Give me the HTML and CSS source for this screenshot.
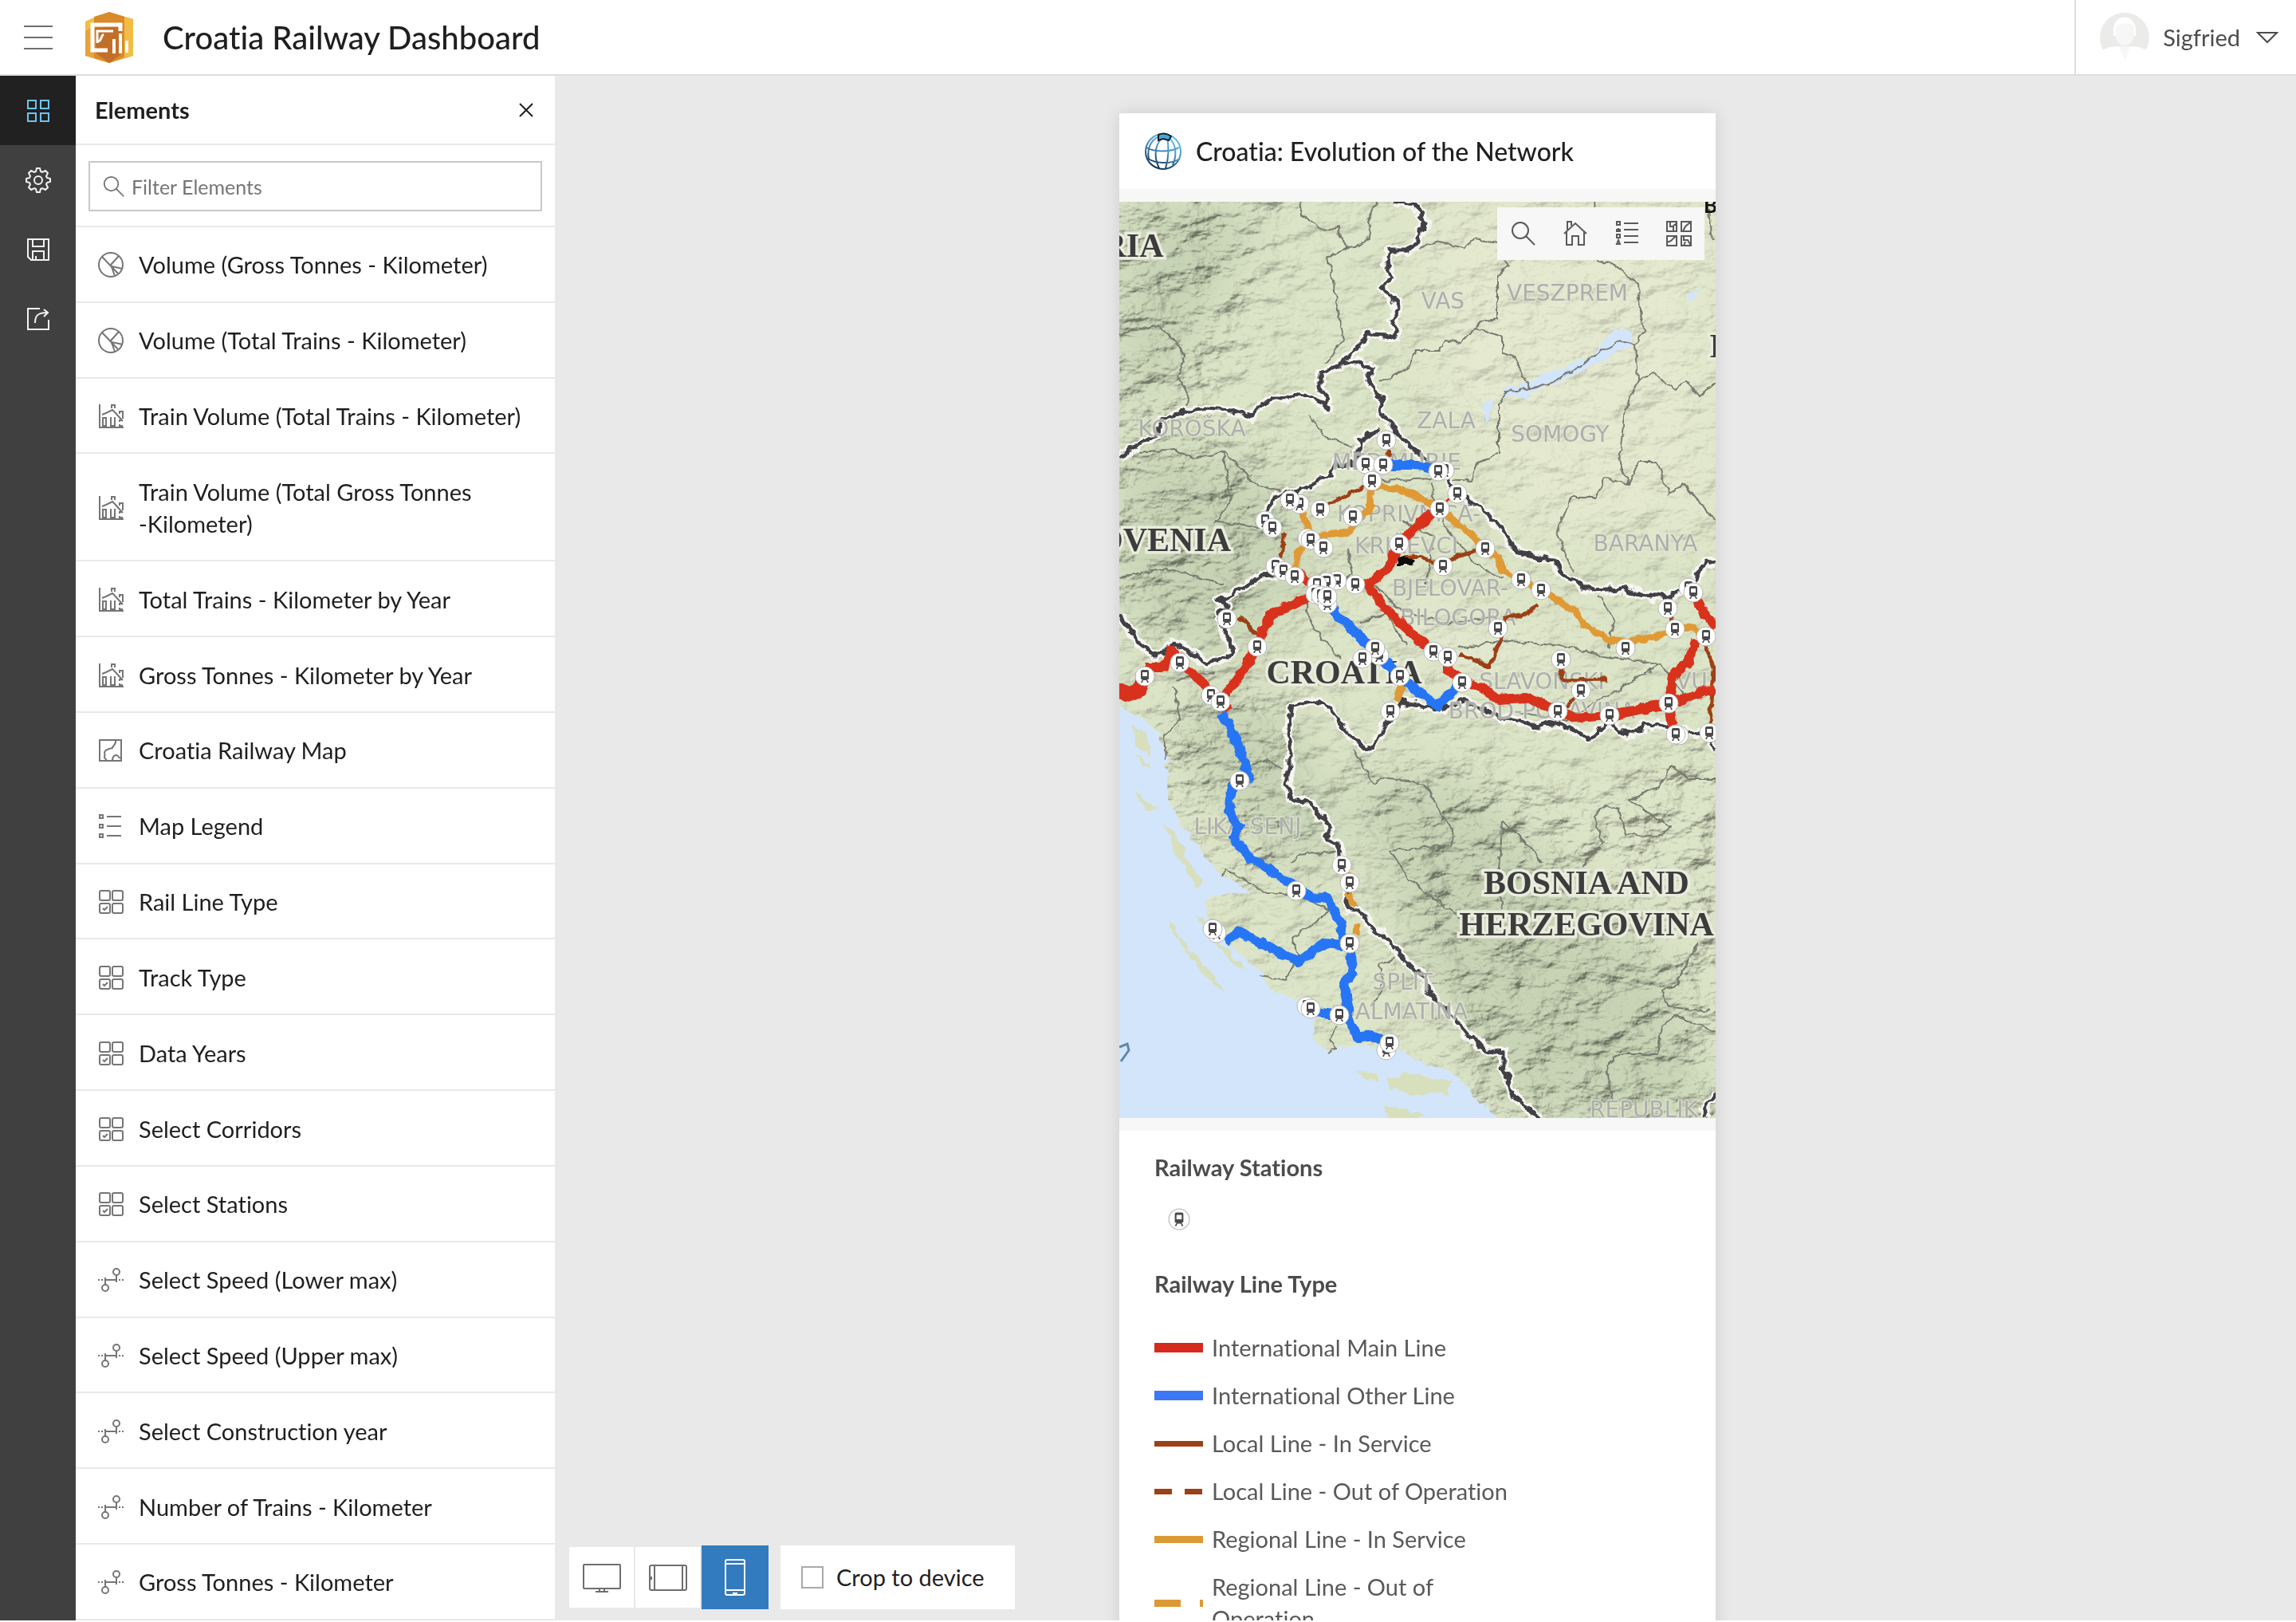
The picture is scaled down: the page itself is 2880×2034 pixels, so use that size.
FILE: index.html
```html
<!DOCTYPE html>
<html lang="en">
<head>
    <meta charset="UTF-8">
    <meta name="viewport" content="width=device-width, initial-scale=1.0">
    <title>Croatia Railway Dashboard</title>
    <link rel="stylesheet" href="styles.css">
</head>
<body>
    <!-- shared icons -->
    <svg class="sprite" aria-hidden="true">
        <symbol id="i-pie" viewBox="0 0 32 32"><circle cx="16" cy="16" r="15"/><path d="M5 6l20 21M16 16L26 5M16 16l5 14M17 18l14 3"/></symbol>
        <symbol id="i-chart" viewBox="0 0 32 32"><path d="M2 1v29h30M6 28V18h4v10zM16 17v11h5V17M17 6V2h4v4M27 13v-3h4v9M31 21h-4v2M27 26v2h4M5 14l5-2 8-4 3 3 10 11"/></symbol>
        <symbol id="i-map" viewBox="0 0 32 32"><path d="M2 3h27v26H2zM22 3c1 7-3 5-4 10-5 1-10 3-10 6 2 3-2 6 1 7l2 3M18 29c0-5 2-7 5-7s1 3 6 4"/></symbol>
        <symbol id="i-legend" viewBox="0 0 32 32"><path d="M2 2h4v4H2zM2 14h4v4H2zM2 26h4v4H2zM11 4h18M11 16h18M11 28h18"/></symbol>
        <symbol id="i-cat" viewBox="0 0 32 32"><rect x="2" y="2" width="13" height="12" rx="2"/><rect x="18" y="2" width="13" height="12" rx="2"/><rect x="2" y="18" width="13" height="12" rx="2"/><rect x="18" y="18" width="13" height="12" rx="2"/><path d="M6 24l2 2 4-4"/></symbol>
        <symbol id="i-range" viewBox="0 0 32 32"><circle cx="23" cy="6" r="4"/><circle cx="9" cy="26" r="4"/><path d="M9 16h14M9 13v9M23 10v9M0 16h2M4 16h2M26 16h2M30 16h2"/></symbol>
        <symbol id="i-search" viewBox="0 0 32 32"><circle cx="12" cy="12" r="10"/><path d="M19 19l11 11"/></symbol>
        <symbol id="i-station" viewBox="-13 -13 26 26"><circle r="12" fill="#fff" stroke="#b5b5b5" stroke-width="1"/><path fill="#4a4a4a" fill-rule="evenodd" stroke="none" d="M-3-8h6q2 0 2 2v9q0 1-2 1l2 4h-2l-1-3h-4l-1 3h-2l2-4q-2 0-2-1v-9q0-2 2-2zM-3-5h6v5h-6z"/></symbol>
    </svg>

    <div class="app">
        <header class="topbar">
            <button class="menu-btn" type="button" aria-label="Menu"><span></span><span></span><span></span></button>
            <svg class="logo" viewBox="0 0 60 64" aria-hidden="true">
                <path fill="#e8a33a" d="M30 0l30 9v46L30 64 0 55V12z"/>
                <path fill="#d98a2b" d="M30 0l19 6v50L30 64 11 58V6z"/>
                <path fill="#f1bd45" d="M49 6l11 3v46l-11 2zM0 12l11-5v10L0 24z"/>
                <path fill="#b9652a" d="M12 20l34-2v34L30 64 14 52z" opacity=".75"/>
                <path fill="none" stroke="#fff" stroke-width="5" d="M44 24v-8H9v32h19"/>
                <path fill="none" stroke="#fff" stroke-width="3" d="M15 39V24h20M16 37c5-1 3-7 7-9"/>
                <path fill="none" stroke="#fff" stroke-width="4" d="M36 52V34M44 52V27M52 51V36"/>
            </svg>
            <h1>Croatia Railway Dashboard</h1>
            <button class="user" type="button">
                <svg class="avatar" viewBox="0 0 62 62" aria-hidden="true">
                    <clipPath id="av"><circle cx="31" cy="31" r="31"/></clipPath>
                    <g clip-path="url(#av)"><path fill="#ebebea" d="M0 0h62v62H0z"/><path fill="#fff" d="M2 62V48q9-6 20-6h18q11 0 20 6v14z"/><path fill="#fff" d="M17 22C17 0 45 0 45 22v7H17z"/><path fill="#f7f7f7" d="M20 16q11-5 23-1 2 26-12 26T20 16zM24 42h14l-7 18z"/></g>
                </svg>
                Sigfried
                <svg class="caret" viewBox="0 0 28 16" aria-hidden="true"><path d="M2 2h24L14 14z"/></svg>
            </button>
        </header>

        <div class="body">
            <nav class="rail">
                <button class="active" type="button" aria-label="Elements"><svg viewBox="0 0 32 32"><path d="M3 3h10v10H3zM19 3h10v10H19zM3 19h10v10H3zM19 19h10v10H19z"/></svg></button>
                <button type="button" aria-label="Settings"><svg viewBox="0 0 32 32"><circle cx="16" cy="16" r="5"/><path d="M13 5l1-4h4l1 4 2 1 4-2 3 3-2 4 1 2 4 1v4l-4 1-1 2 2 4-3 3-4-2-2 1-1 4h-4l-1-4-2-1-4 2-3-3 2-4-1-2-4-1v-4l4-1 1-2-2-4 3-3 4 2z"/></svg></button>
                <button type="button" aria-label="Save"><svg viewBox="0 0 32 32"><path d="M3 3h26v26H7l-4-4zM9 3v9h14V3M9 29V18h14v11M13 29v-5"/></svg></button>
                <button type="button" aria-label="Share"><svg viewBox="0 0 32 32"><path d="M18 3H3v26h26V17M12 21c0-9 3-13 16-13M23 4l5 4-5 5"/></svg></button>
            </nav>

            <aside class="panel">
                <div class="panel-head">
                    <h2>Elements</h2>
                    <button type="button" aria-label="Close"><svg viewBox="0 0 18 18"><path d="M1 1l16 16M17 1L1 17"/></svg></button>
                </div>
                <div class="filter">
                    <label class="filter-box">
                        <svg aria-hidden="true"><use href="#i-search"/></svg>
                        <input type="text" placeholder="Filter Elements" aria-label="Filter Elements">
                    </label>
                </div>
                <ul class="elements">
                    <li><button type="button"><svg><use href="#i-pie"/></svg>Volume (Gross Tonnes - Kilometer)</button></li>
                    <li><button type="button"><svg><use href="#i-pie"/></svg>Volume (Total Trains - Kilometer)</button></li>
                    <li><button type="button"><svg><use href="#i-chart"/></svg>Train Volume (Total Trains - Kilometer)</button></li>
                    <li><button type="button"><svg><use href="#i-chart"/></svg><span>Train Volume (Total Gross Tonnes<br>-Kilometer)</span></button></li>
                    <li><button type="button"><svg><use href="#i-chart"/></svg>Total Trains - Kilometer by Year</button></li>
                    <li><button type="button"><svg><use href="#i-chart"/></svg>Gross Tonnes - Kilometer by Year</button></li>
                    <li><button type="button"><svg><use href="#i-map"/></svg>Croatia Railway Map</button></li>
                    <li><button type="button"><svg><use href="#i-legend"/></svg>Map Legend</button></li>
                    <li><button type="button"><svg><use href="#i-cat"/></svg>Rail Line Type</button></li>
                    <li><button type="button"><svg><use href="#i-cat"/></svg>Track Type</button></li>
                    <li><button type="button"><svg><use href="#i-cat"/></svg>Data Years</button></li>
                    <li><button type="button"><svg><use href="#i-cat"/></svg>Select Corridors</button></li>
                    <li><button type="button"><svg><use href="#i-cat"/></svg>Select Stations</button></li>
                    <li><button type="button"><svg><use href="#i-range"/></svg>Select Speed (Lower max)</button></li>
                    <li><button type="button"><svg><use href="#i-range"/></svg>Select Speed (Upper max)</button></li>
                    <li><button type="button"><svg><use href="#i-range"/></svg>Select Construction year</button></li>
                    <li><button type="button"><svg><use href="#i-range"/></svg>Number of Trains - Kilometer</button></li>
                    <li><button type="button"><svg><use href="#i-range"/></svg>Gross Tonnes - Kilometer</button></li>
                </ul>
            </aside>

            <main class="canvas">
                <section class="device">
                    <div class="device-head">
                        <svg class="globe" viewBox="0 0 48 48" aria-hidden="true">
                            <defs><linearGradient id="gl" x1=".8" y1="0" x2=".3" y2="1"><stop offset="0" stop-color="#6cc4f0"/><stop offset=".45" stop-color="#4a95c4"/><stop offset="1" stop-color="#0d2d4c"/></linearGradient></defs>
                            <g fill="none" stroke="url(#gl)" stroke-width="2"><circle cx="24" cy="24" r="22"/><path d="M27 3c-13 9-16 26-8 42M29 5c2 12 2 28-2 40M27 3c12 8 16 22 9 38M27 3C10 5 3 18 6 34M3 19c10 6 30 6 41 0M5 33c10 6 28 7 38 1"/></g>
                            <path fill="#3ba9e6" d="M18 3q8-4 16 2l-3 5-7-2-6 2z"/>
                        </svg>
                        <h2>Croatia: Evolution of the Network</h2>
                    </div>

                    <div class="map">
                        <svg class="map-svg" viewBox="0 0 748 1149" preserveAspectRatio="xMidYMid slice" role="img" aria-label="Croatia railway map">
                            <defs>
                                <filter id="relief" x="0" y="0" width="100%" height="100%">
                                    <feTurbulence type="fractalNoise" baseFrequency=".02 .032" numOctaves="5" seed="8" result="n"/>
                                    <feColorMatrix in="n" values="0 0 0 0 0 0 0 0 0 0 0 0 0 0 0 1.1 0 0 0 0"/>
                                    <feDiffuseLighting surfaceScale="20" diffuseConstant="1.2" lighting-color="#fff"><feDistantLight azimuth="225" elevation="56"/></feDiffuseLighting>
                                </filter>
                                <filter id="rough" x="-5%" y="-5%" width="110%" height="110%">
                                    <feTurbulence type="fractalNoise" baseFrequency=".07" numOctaves="3" seed="3" result="n"/>
                                    <feDisplacementMap in="SourceGraphic" in2="n" scale="13" xChannelSelector="R" yChannelSelector="G"/>
                                </filter>
                                <filter id="rough-sm" x="-5%" y="-5%" width="110%" height="110%">
                                    <feTurbulence type="fractalNoise" baseFrequency=".09" numOctaves="2" seed="5" result="n"/>
                                    <feDisplacementMap in="SourceGraphic" in2="n" scale="8" xChannelSelector="R" yChannelSelector="G"/>
                                </filter>
                                <filter id="soft"><feGaussianBlur stdDeviation="30"/></filter>
                                <!-- where the hills are: white is steep, grey is flat -->
                                <mask id="hills">
                                    <rect width="748" height="1149" fill="#555"/>
                                    <g filter="url(#soft)" fill="#fff"><path d="M-40-40h260L120 260-40 300zM-40 290l240 20 20 130-110 120-150-40zM40 620l170-20 40 240-90 20-120-120zM280 700l200 10 300 100v400H480L380 960zM640 690h140v200l-120-60z"/></g>
                                </mask>
                                <path id="borders" d="M345 0L369 4 379 14 384 27 377 37 377 50 360 60 338 60 335 77 341 94 332 110 343 124 351 135 343 150 348 160 346 170 331 167 308 165 306 177 287 194 275 205 253 214 253 230 262 247 262 259 248 249 226 242 209 247 192 247 175 257 165 270 141 262 108 260 78 264 52 274 45 294 30 300 0 320M277 204L302 200 316 209 314 227 331 250 326 264 348 288 365 307 384 324 408 337 416 357 437 374 462 390 481 414 500 440 544 449 559 469 593 487 631 485 665 494 690 497 699 490 719 484 728 464 736 450 748 454M326 285L302 300 299 317 306 330 270 329 265 344 234 359 195 370 185 390 180 405M202 467L178 469 156 484 125 499 137 507 127 514 127 530 137 550 144 562 137 570 110 579 93 567 81 560 64 554 57 567 44 569 25 554 18 544 6 527 0 517M748 687L738 667 714 664 675 657 660 654 646 667 626 664 612 650 590 674 573 664 554 654 525 657 481 647 457 637 428 624 408 637 369 630 355 627 340 647 331 660 316 687 297 677 272 647 258 630 238 627 217 634 212 667 214 684 214 707 209 730 219 750 238 754 258 774 265 787 260 799 277 810 280 830 287 854 287 887 302 890 316 910 335 924 355 947 384 977 391 997 413 1014 437 1044 462 1064 481 1067 481 1087 498 1124 512 1137 527 1152M748 1117L738 1130 733 1149"/>
                            </defs>

                            <!-- land, relief, water -->
                            <rect width="748" height="1149" fill="#dde5c8"/>
                            <g filter="url(#soft)" fill="#b9c8a8" opacity=".6"><path d="M0 0h190L60 240 0 260zM0 300l190 30 60 130-110 120-140-60zM60 640l150-20 70 200-60 20-120-120zM280 720l150 0 260 240 58 189H500L380 960z"/></g>
                            <g filter="url(#soft)" fill="#e4e9cf"><path d="M380 0h368v400L540 420 400 260zM300 480l300 100-180 20z"/></g>
                            <g mask="url(#hills)"><rect class="relief" width="748" height="1149" filter="url(#relief)"/></g>
                            <g fill="#d3e5fb" filter="url(#rough)">
                                <path d="M-10 630L15 640 49 664 61 700 59 707 61 747 83 790 127 844 166 865 112 872 108 894 141 934 175 964 190 987 243 1010 246 1054 268 1064 306 1057 335 1064 355 1064 384 1082 418 1090 437 1110 457 1134 485 1160H-10z"/>
                                <path d="M481 237L515 224 597 190 622 157 643 164 643 177 627 187 578 214 510 244 481 245zM456 252l12-5-2 22-8 8zM715 115l15-10-7 14-11 6z"/>
                            </g>
                            <g fill="#d8dfbd" filter="url(#rough)">
                                <path d="M338 1101l18-8 40 6 20 6-6 12-42 5-26-9zM296 1088l26 8 4 8-18-5zM330 1138l28 0 26 8-20 6-30-4zM14 655l16 10 9 35-12-14zM18 740l14 6 16 18-12-2zM56 780l14 14 34 62-8 4-30-50zM60 900l30 40 38 42 6 12-40-38-34-50zM95 890l30 38 36 36-14-4-40-44zM22 690l12 14 6 10-14-10z"/>
                            </g>
                            <path d="M0 1060l10-4 2 8-10 14" fill="none" stroke="#5f87a5" stroke-width="3"/>

                            <!-- county lines -->
                            <g fill="none" stroke="#77796f" stroke-width="2" stroke-linejoin="round" filter="url(#rough-sm)">
                                <path d="M226 0L229 17 258 37 276 32 277 44 287 57 262 69 270 110 275 144 282 172 258 204M323 0L311 24 316 37 306 54 287 57M0 166L47 155 69 172 81 194 74 220 86 244 83 260M377 57L399 49 433 59 447 47 474 52M483 74L488 80 474 94 474 147 454 150 445 160 428 177 408 174 401 187 374 187 360 210 326 227M445 157L481 170 481 190 496 194 515 235M476 317L476 254 486 237 515 235 549 224 588 199 627 174 648 180M596 0L602 74 624 80 651 104 653 137 658 160 648 180 651 224 634 260 627 327 639 354 610 347 597 370 566 370 549 414 568 464M639 354L651 327 675 327 690 367 709 354 748 400M651 224L668 214 699 235 711 224 728 244 748 227M740 10l4 40"/>
                                <path d="M238 267L258 294 292 307M25 314L69 310 93 322 132 314 175 357 209 364M474 317L449 327 442 350 394 347 326 350M394 354L391 370 408 407 447 454 481 474M287 434L292 467 234 497 238 527 277 574M302 527L335 517 360 557M425 560L481 550 554 557 597 567 675 580M602 494L622 527 612 560M69 607L76 650 57 670 59 700M0 470l60-10 70 20M120 400l60 10M320 480l30 30 60 20 60-10M130 314l10 60-20 30M500 640l60 10 50-30 70-40 30 40M70 600l50-10M355 400l40 20-10 60"/>
                                <path d="M294 687L319 730 326 722 384 730 399 760 418 787 416 807 340 814 365 850 430 900M748 724L714 724 692 707 677 734 639 750 692 784 675 795 636 794 627 764 610 757 595 770 607 804 580 834M726 927L699 980 680 990 690 1010 743 1015M617 1127L612 1084 627 1069 675 1069 680 1034 697 1020 748 1040M129 847L134 837 185 867 224 869 263 890 217 924 226 947 209 975 178 970M217 830L224 820 280 815M481 887L476 837 481 777 520 814 530 830M350 947L326 957 331 987 316 1010M275 1034l-10 14 6 14-10 6M165 705l20-5 20 10"/>
                            </g>

                            <!-- country borders -->
                            <g fill="none" stroke-linejoin="round" filter="url(#rough)">
                                <use href="#borders" stroke="#f6f5f0" stroke-width="12"/>
                                <use href="#borders" stroke="#414145" stroke-width="5"/>
                            </g>

                            <g class="county">
                                <text x="406" y="134">VAS</text>
                                <text x="562" y="124">VESZPREM</text>
                                <text x="410" y="284">ZALA</text>
                                <text x="553" y="301">SOMOGY</text>
                                <text x="91" y="294">KOROŠKA</text>
                                <text x="348" y="336">MEĐIMURJE</text>
                                <text x="363" y="401">KOPRIVNICA-</text>
                                <text x="360" y="441">KRIŽEVCI</text>
                                <text x="415" y="494">BJELOVAR-</text>
                                <text x="425" y="531">BILOGORA</text>
                                <text x="660" y="438">BARANYA</text>
                                <text x="530" y="611">SLAVONSKI</text>
                                <text x="530" y="648">BROD-POSAVINA</text>
                                <text x="161" y="793">LIKA-SENJ</text>
                                <text x="359" y="988">SPLIT-</text>
                                <text x="356" y="1025">DALMATINA</text>
                                <text x="658" y="1148">REPUBLIK</text>
                                <text x="718" y="611">VU</text>
                            </g>
                            <g class="country">
                                <text x="17" y="69">RIA</text>
                                <text x="56" y="438">OVENIA</text>
                                <text x="282" y="604">CROATIA</text>
                                <text x="586" y="868">BOSNIA AND</text>
                                <text x="586" y="920">HERZEGOVINA</text>
                                <text x="757" y="195">H</text>
                            </g>
                            <text class="city" x="733" y="14">B</text>

                            <!-- rail lines -->
                            <g fill="none" stroke-linejoin="round" filter="url(#rough-sm)">
                                <path stroke="#9c4018" stroke-width="5" d="M309 357L287 367 253 384M209 415L205 427 202 454M335 299L338 320M355 447L379 445 406 457 423 445 459 435M151 520L173 544M428 569L464 582 481 544 483 520 505 520 525 505M554 574L556 600 612 599M580 612L561 634M736 557L746 587 740 667M688 510L697 535"/>
                                <path stroke="#df9a36" stroke-width="9" d="M316 355L365 364 401 385 430 407 459 435 476 447 481 464 505 475 530 487 573 514 583 530 612 549 636 552 675 545 697 535 719 534 736 545M316 350L314 387 294 395 289 414 258 417 238 425 224 440 219 467M231 390L238 414M355 604L348 627M287 867L294 884M298 905L297 919M280 842l8 4"/>
                                <path fill="#111" d="M349 444l14 2 8 4-4 6h-18z"/>
                                <path stroke="#d8301f" stroke-width="12" d="M32 584L54 584 66 564 76 579 98 597 127 627 156 587 173 557 190 517 238 497 248 484M223 466l20 14M297 480L311 479 338 460 350 430 369 410 401 385M311 480L331 507 355 530 384 557 413 572 413 587 430 602 457 610 476 624 510 622 549 637 573 647 617 644 690 629 748 610M719 489L733 514 748 534M723 550L714 577 694 594 690 629 694 660M127 627l10 12"/>
                                <path stroke="#d8301f" stroke-width="18" d="M-4 612L12 618 24 614 30 596"/>
                                <path stroke="#d8301f" stroke-width="4" d="M401 385L416 370"/>
                                <path stroke="#2874f5" stroke-width="12" d="M331 330L374 330 401 338M260 504L306 550 352 595 399 632 430 604M127 640L142 664 156 700 163 724 142 730 137 764 149 784 144 800 166 824 214 854 243 874 260 872 277 904 282 930 289 930 292 967 282 980 287 1007 287 1024 299 1049 316 1045 335 1054M134 927L151 915 185 934 224 952 258 930 282 932M241 1015L275 1020"/>
                            </g>

                            <g id="stations"></g>
                        </svg>

                        <div class="map-tools">
                            <button type="button" aria-label="Search"><svg><use href="#i-search"/></svg></button>
                            <button type="button" aria-label="Home"><svg viewBox="0 0 32 32"><path d="M2 16L16 3l14 13M5 14v16h7V19h8v11h7V14M6 11V1h5v5"/></svg></button>
                            <button type="button" aria-label="Legend"><svg viewBox="0 0 32 32"><path d="M3 1h4v4H3zM3 17h4v4H3zM5 9v3M3 11h4v2H3zM3 29l2-5 2 5zM12 3h18M12 11h18M12 19h18M12 27h18"/></svg></button>
                            <button type="button" aria-label="Basemap"><svg viewBox="0 0 32 32"><path d="M1 1h12v12H1zM19 1h12v12H19zM1 19h12v12H1zM19 19h12v12H19zM5 1v6h4v6M13 3L8 7M30 2l-6 5-3 6M1 27l5-2 6-6M22 19v5h5l4 7M22 31l2-5"/></svg></button>
                        </div>
                    </div>

                    <div class="legend">
                        <h3>Railway Stations</h3>
                        <svg class="station" aria-hidden="true"><use href="#i-station"/></svg>
                        <h3>Railway Line Type</h3>
                        <ul>
                            <li><i class="line main"></i>International Main Line</li>
                            <li><i class="line other"></i>International Other Line</li>
                            <li><i class="line local"></i>Local Line - In Service</li>
                            <li><i class="line local-out"></i>Local Line - Out of Operation</li>
                            <li><i class="line regional"></i>Regional Line - In Service</li>
                            <li><i class="line regional-out"></i><span>Regional Line - Out of<br>Operation</span></li>
                        </ul>
                    </div>
                </section>

                <div class="device-bar">
                    <button type="button" aria-label="Desktop"><svg viewBox="0 0 48 48"><rect x="1" y="8" width="46" height="30" rx="1"/><path d="M21 38v4M27 38v4M16 42h16"/></svg></button>
                    <button type="button" aria-label="Tablet"><svg viewBox="0 0 48 48"><rect x="1" y="9" width="46" height="31" rx="2"/><path d="M7 9v31M42 9v31M3 23v4"/></svg></button>
                    <button class="active" type="button" aria-label="Phone"><svg viewBox="0 0 48 48"><rect x="12" y="2" width="24" height="44" rx="2"/><path d="M12 7h24M12 40h24M21 44h6"/></svg></button>
                    <label class="crop"><input type="checkbox">Crop to device</label>
                </div>
            </main>
        </div>
    </div>

    <script>
        const STATIONS = [
            [335, 299], [309, 329], [331, 330], [408, 337], [400, 338], [317, 350], [424, 366], [402, 385],
            [226, 379], [214, 374], [252, 386], [293, 395], [183, 400], [192, 409], [236, 422], [240, 424],
            [256, 434], [351, 429], [459, 435], [406, 457], [196, 457], [206, 463], [220, 470], [273, 475],
            [260, 477], [248, 480], [296, 480], [246, 492], [253, 494], [261, 504], [261, 495], [504, 474],
            [529, 487], [714, 484], [720, 490], [688, 510], [697, 536], [736, 545], [135, 523], [173, 558],
            [475, 535], [635, 560], [554, 574], [394, 564], [412, 571], [326, 569], [321, 560], [305, 573],
            [352, 595], [430, 603], [76, 578], [32, 595], [115, 619], [127, 627], [340, 639], [579, 613],
            [550, 639], [615, 644], [689, 629], [702, 669], [698, 668], [740, 666], [151, 726], [222, 864],
            [279, 832], [289, 854], [289, 930], [122, 917], [117, 912], [235, 1009], [240, 1012], [276, 1020],
            [335, 1064], [339, 1055]
        ];

        document.getElementById("stations").innerHTML = STATIONS.map(([x, y]) =>
            `<use href="#i-station" x="${x - 13}" y="${y - 13}" width="26" height="26"/>`
        ).join("");
    </script>
</body>
</html>
```

FILE: styles.css
```css
* {
    box-sizing: border-box;
}
body {
    margin: 0;
    font-family: Lato, "Open Sans", sans-serif;
    font-size: 29px;
    font-variant-ligatures: none;
    line-height: 40px;
    color: #1f1f1f;
    background-color: #fff;
}
h1, h2, h3, ul {
    margin: 0;
    padding: 0;
}
ul {
    list-style: none;
}
button {
    margin: 0;
    padding: 0;
    border: 0;
    background: none;
    font: inherit;
    font-variant-ligatures: none;
    color: inherit;
    cursor: pointer;
}
svg {
    display: block;
    flex: none;
    fill: none;
    stroke: currentColor;
    stroke-width: 2px;
}
.sprite {
    position: absolute;
    width: 0;
    height: 0;
}
.app {
    display: flex;
    flex-direction: column;
    height: 100vh;
    padding-bottom: 2px;
}

/* top bar */
.topbar {
    display: flex;
    align-items: center;
    flex: none;
    height: 95px;
    padding-left: 30px;
    border-bottom: 2px solid #ddd;
}
.menu-btn {
    display: flex;
    flex-direction: column;
    gap: 12px;
    width: 36px;
    margin-right: 41px;
}
.menu-btn span {
    height: 2px;
    background-color: #6e6e6e;
}
.logo {
    width: 60px;
    height: 64px;
    margin-right: 37px;
    stroke: none;
}
.topbar h1 {
    flex: 1;
    font-size: 40px;
    font-weight: 500;
    line-height: 56px;
}
.user {
    display: flex;
    align-items: center;
    align-self: stretch;
    padding: 0 22px 0 30px;
    border-left: 2px solid #ddd;
    color: #4c4c4c;
}
.avatar {
    width: 62px;
    height: 62px;
    margin-right: 17px;
    stroke: none;
}
.caret {
    width: 28px;
    height: 16px;
    margin-left: 20px;
}

.body {
    display: flex;
    flex: 1;
    min-height: 0;
}

/* left rail */
.rail {
    flex: none;
    width: 95px;
    background-color: #404040;
    color: #f2f2f2;
}
.rail button {
    display: flex;
    align-items: center;
    justify-content: center;
    width: 100%;
    height: 87px;
}
.rail svg {
    width: 32px;
    height: 32px;
}
.rail .active {
    background-color: #212121;
    color: #6ec3ef;
}

/* elements panel */
.panel {
    display: flex;
    flex-direction: column;
    flex: none;
    width: 601px;
    background-color: #fff;
}
.panel-head {
    display: flex;
    align-items: center;
    justify-content: space-between;
    height: 87px;
    padding: 0 27px 0 24px;
    border-bottom: 2px solid #e9e9e9;
}
.panel-head h2 {
    font-size: 29px;
    font-weight: 700;
}
.panel-head svg {
    width: 18px;
    height: 18px;
}
.filter {
    padding: 20px 16px 18px;
    border-bottom: 2px solid #e9e9e9;
}
.filter-box {
    display: flex;
    align-items: center;
    gap: 8px;
    height: 63px;
    padding: 0 16px;
    border: 2px solid #c9c9c9;
    color: #6e6e6e;
}
.filter-box svg {
    width: 28px;
    height: 28px;
}
.filter-box input {
    flex: 1;
    min-width: 0;
    padding: 0;
    border: 0;
    outline: 0;
    font: inherit;
    font-size: 25px;
}
.filter-box input::placeholder {
    color: #757575;
}
.elements {
    display: flex;
    flex-direction: column;
    flex: 1;
    min-height: 0;
    overflow: hidden;
}
.elements li {
    display: flex;
    flex: 1 0 auto;
    border-bottom: 2px solid #e9e9e9;
}
.elements button {
    display: flex;
    align-items: center;
    gap: 19px;
    width: 100%;
    padding: 27px 24px 25px 28px;
    text-align: left;
}
.elements svg {
    width: 32px;
    height: 32px;
    color: #757575;
}

/* canvas */
.canvas {
    position: relative;
    flex: 1;
    min-width: 0;
    padding: 47px 20px 0 0;
    background-color: #e9e9e9;
    overflow: hidden;
}
.device {
    width: 748px;
    max-width: 100%;
    margin: 0 auto;
    background-color: #fff;
    box-shadow: 0 0 20px rgba(0, 0, 0, 0.12);
}
.device-head {
    display: flex;
    align-items: center;
    gap: 17px;
    height: 95px;
    padding: 0 31px;
}
.device-head h2 {
    font-size: 32px;
    font-weight: 500;
}
.globe {
    width: 48px;
    height: 48px;
}
.map {
    position: relative;
    aspect-ratio: 748 / 1181;
    border-top: 16px solid #f7f7f7;
    border-bottom: 16px solid #f7f7f7;
}
.map-svg {
    width: 100%;
    height: 100%;
    stroke: none;
}
.map-svg > g {
    isolation: auto;
}
.relief {
    opacity: 0.45;
}
.map-svg g[mask] {
    mix-blend-mode: multiply;
}
.county, .country {
    text-anchor: middle;
    paint-order: stroke;
}
.county {
    font-family: "DejaVu Sans", sans-serif;
    font-size: 28px;
    fill: #adaeae;
    stroke: rgba(230, 234, 212, 0.6);
    stroke-width: 3px;
}
.country {
    font-family: "Liberation Serif", serif;
    font-size: 42px;
    font-weight: 700;
    fill: #3c3c3c;
    stroke: #e9ecdd;
    stroke-width: 7px;
}
.city {
    font-size: 26px;
    font-weight: 700;
    fill: #111;
}
.map-tools {
    position: absolute;
    top: 7px;
    right: 14px;
    display: flex;
    justify-content: space-around;
    width: 260px;
    height: 66px;
    background-color: #f7f7f7;
    color: #5a5a5a;
}
.map-tools button {
    padding: 0 16px;
}
.map-tools svg {
    width: 32px;
    height: 32px;
}

/* legend */
.legend {
    padding: 26px 44px;
    color: #595959;
}
.legend h3 {
    font-size: 29px;
    font-weight: 700;
    color: #4c4c4c;
}
.station {
    width: 28px;
    height: 28px;
    margin: 31px 17px 47px;
}
.legend ul {
    display: flex;
    flex-direction: column;
    gap: 20px;
    margin-top: 40px;
}
.legend li {
    display: flex;
    align-items: center;
    gap: 11px;
}
.line {
    flex: none;
    width: 61px;
    height: 12px;
}
.main {
    background-color: #d52b1e;
}
.other {
    background-color: #3b78f6;
}
.local {
    height: 7px;
    background-color: #9c4018;
}
.local-out {
    height: 7px;
    background: repeating-linear-gradient(90deg, #9c4018 0 22px, transparent 22px 38px);
}
.regional {
    height: 9px;
    background-color: #db9a35;
}
.regional-out {
    height: 9px;
    background: repeating-linear-gradient(90deg, #db9a35 0 33px, transparent 33px 57px);
}

/* device switcher, floats over the canvas */
.device-bar {
    position: absolute;
    left: 18px;
    bottom: 14px;
    display: flex;
    align-items: center;
    gap: 2px;
}
.device-bar button {
    display: flex;
    align-items: center;
    justify-content: center;
    width: 81px;
    height: 76px;
    background-color: #fff;
    color: #6e6e6e;
}
.device-bar svg {
    width: 48px;
    height: 48px;
}
.device-bar .active {
    width: 84px;
    height: 80px;
    background-color: #327bbe;
    color: #fff;
}
.crop {
    display: flex;
    align-items: center;
    gap: 16px;
    height: 80px;
    margin-left: 13px;
    padding: 0 38px 0 26px;
    background-color: #fff;
}
.crop input {
    appearance: none;
    width: 28px;
    height: 28px;
    margin: 0;
    border: 2px solid #a9a9a9;
    background-color: #fff;
}
```
